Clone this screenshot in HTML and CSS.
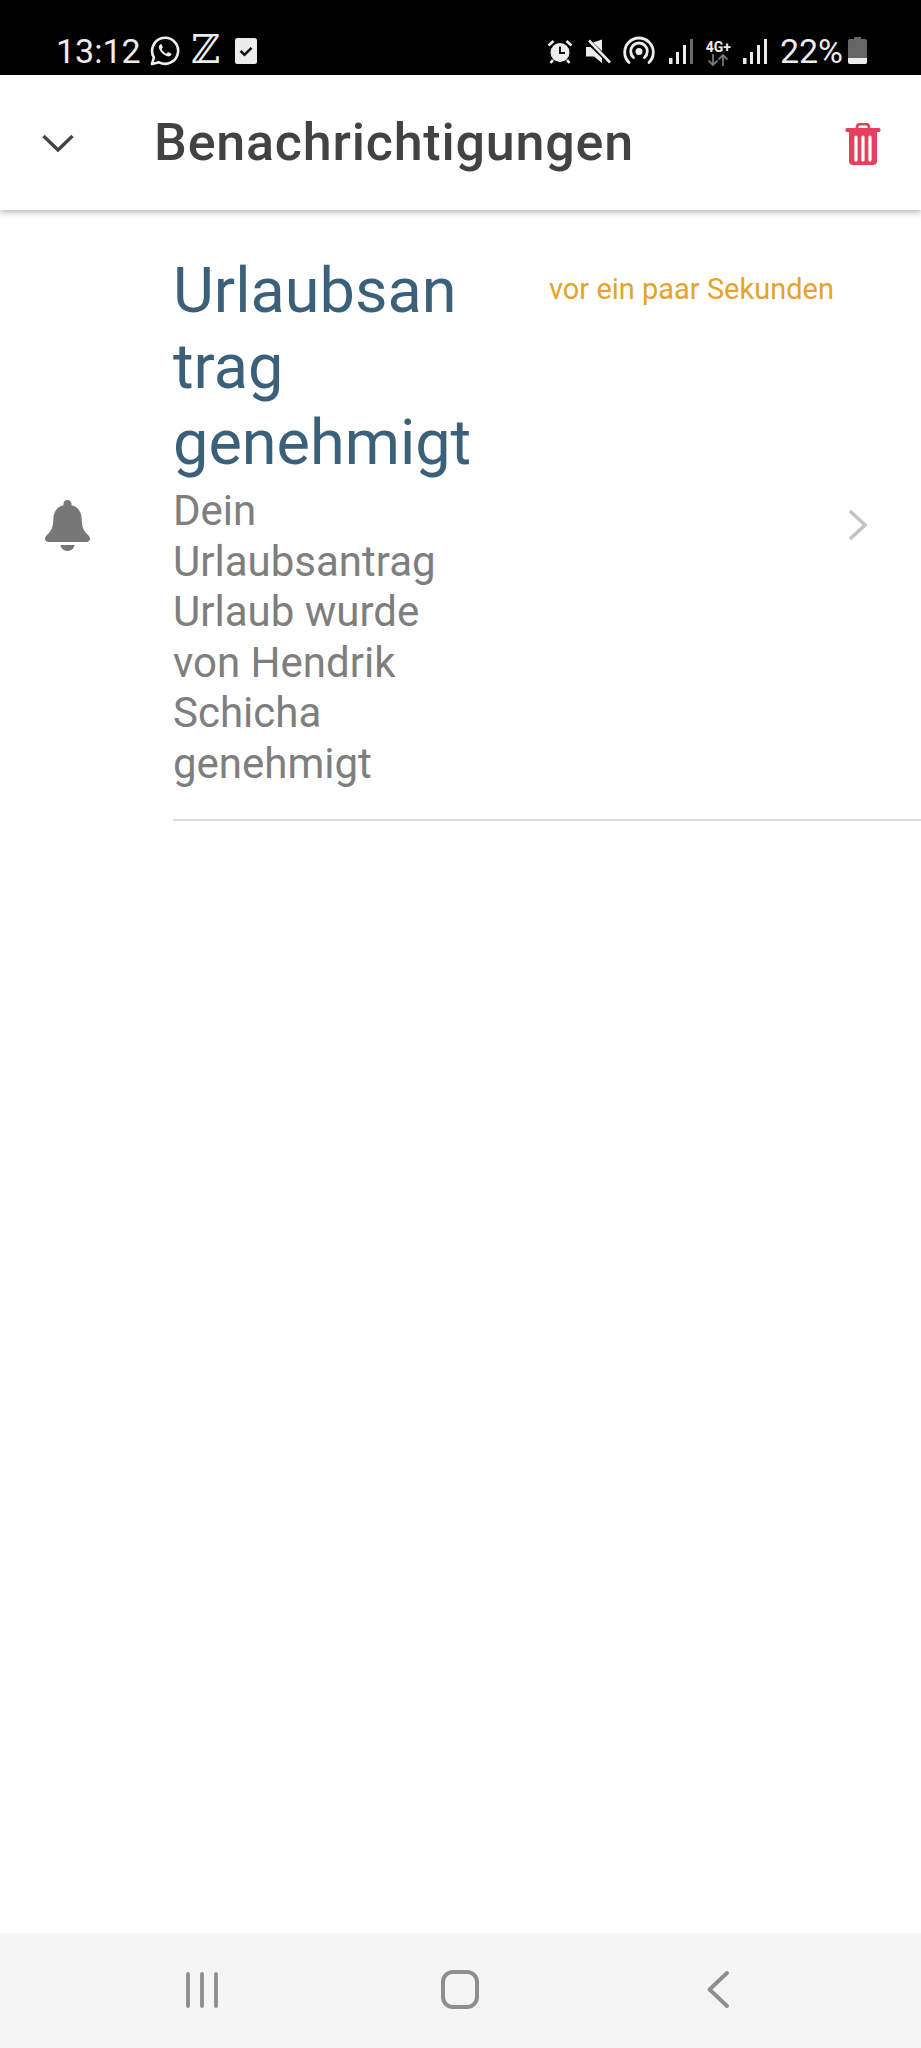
FILE: index.html
```html
<!DOCTYPE html>
<html>
	<head>
		<meta http-equiv="Content-Type" content="text/html; charset=UTF-8" />
		<meta name="viewport" content="initial-scale=1.0">
		<title>Benachrichtigungen</title>
		<link rel="stylesheet" href="styles.css">
	</head>
	<body>
		<div class="status-bar">
			<div class="status-group">
				<span class="status-time">13:12</span>
				<svg class="st-whatsapp" width="30" height="30" viewBox="0 0 30 30" fill="none" stroke="#f0f0f0" stroke-width="2.6">
					<path d="M2 28l1.900-6.600A13 13 0 1 1 9 26.300z" stroke-linejoin="round"/>
					<path d="M10.500 8.200c-1.600 1-2 2.800-1.200 4.900 1.300 3.200 4 5.800 7.300 7 2 .7 3.800.2 4.800-1.400.3-.5.2-.9-.3-1.200l-2.500-1.200c-.5-.2-.8-.1-1.100.3l-.9 1.100c-2.300-.9-4-2.500-5-4.700l.9-1c.3-.3.4-.7.2-1.100l-1.100-2.400c-.2-.5-.6-.7-1.100-.3z" fill="#f0f0f0" stroke="none"/>
				</svg>
				<span class="status-z">ℤ</span>
				<svg class="st-check" width="22" height="26" viewBox="0 0 22 26">
					<rect width="22" height="26" rx="2.500" fill="#ececec"/>
					<path d="M5.500 13l4 3.800 7-7" fill="none" stroke="#111" stroke-width="2.600"/>
				</svg>
			</div>
			<div class="status-group">
				<svg class="st-alarm" width="26" height="25" viewBox="0 0 26 25">
					<circle cx="13" cy="13.500" r="9.500" fill="#ececec"/>
					<path d="M13 7.500v6.500h5" fill="none" stroke="#111" stroke-width="2"/>
					<path d="M1.500 6.500l5-4.500M24.500 6.500l-5-4.500M6 21l-2.500 3M20 21l2.500 3" stroke="#ececec" stroke-width="2.600"/>
				</svg>
				<svg class="st-mute" width="26" height="25" viewBox="0 0 26 25">
					<path d="M17 0.500v11.500l-9-8.500zM1 8h4.500l11.500 11v5l-8-6.500h-8z" fill="#ececec"/>
					<path d="M4 1.500l21 22" stroke="#ececec" stroke-width="2.600"/>
				</svg>
				<svg class="st-hotspot" width="32" height="28" viewBox="0 0 32 28" fill="none" stroke="#ececec" stroke-width="2.800" stroke-linecap="round">
					<path d="M6 26.500a14.300 14.300 0 1 1 20 0"/>
					<path d="M10.500 21.500a8.300 8.300 0 1 1 11 0"/>
					<circle cx="16" cy="15.500" r="3.500" fill="#ececec" stroke="none"/>
				</svg>
				<svg class="st-signal" width="24" height="25" viewBox="0 0 24 25" fill="#ececec">
					<rect x="0" y="19" width="3.500" height="6"/>
					<rect x="7" y="13" width="3" height="12"/>
					<rect x="14" y="6" width="3" height="19"/>
					<rect x="21" y="0" width="3" height="25" fill="#6b6b6b"/>
				</svg>
				<div class="st-net">
					<span class="st-net-label">4G+</span>
					<svg width="22" height="12" viewBox="0 0 22 12" fill="none" stroke="#777" stroke-width="1.800">
						<path d="M6 0v11M1.500 6.500l4.500 4.500 4.500-4.500"/>
						<path d="M16 12v-11M11.500 5.500l4.500-4.500 4.500 4.500"/>
					</svg>
				</div>
				<svg class="st-signal st-signal-full" width="24" height="25" viewBox="0 0 24 25" fill="#ececec">
					<rect x="0" y="19" width="3.500" height="6"/>
					<rect x="7" y="13" width="3" height="12"/>
					<rect x="14" y="6" width="3" height="19"/>
					<rect x="21" y="0" width="3" height="25"/>
				</svg>
				<span class="status-batt">22%</span>
				<svg class="st-battery" width="19" height="27" viewBox="0 0 19 27">
					<path d="M6 0h7v2h4a2 2 0 0 1 2 2v21a2 2 0 0 1-2 2H2a2 2 0 0 1-2-2V4a2 2 0 0 1 2-2h4z" fill="#666"/>
					<path d="M0 21h19v4a2 2 0 0 1-2 2H2a2 2 0 0 1-2-2z" fill="#ececec"/>
				</svg>
			</div>
		</div>

		<div class="top-bar">
			<svg class="top-back" width="32" height="18" viewBox="0 0 32 18" fill="none" stroke="#444" stroke-width="3.400">
				<path d="M1.500 2l14.500 14 14.500-14"/>
			</svg>
			<div class="top-title">Benachrichtigungen</div>
			<svg class="top-trash" width="36" height="42" viewBox="0 0 36 42">
				<path d="M12 6V4a3 3 0 0 1 3-3h6a3 3 0 0 1 3 3v2" fill="none" stroke="#e6405e" stroke-width="2.800"/>
				<rect x="0.500" y="5" width="35" height="4" rx="1.500" fill="#e6405e"/>
				<path d="M4 9h28v29a4 4 0 0 1-4 4H8a4 4 0 0 1-4-4z" fill="#e6405e"/>
				<path d="M11 14v23M18 14v23M25 14v23" stroke="#fff" stroke-width="3.200" stroke-linecap="round"/>
			</svg>
		</div>

		<div class="note-list">
			<div class="note-item">
				<div class="note-icon">
					<svg width="45" height="51" viewBox="0 0 45 51" fill="#777">
						<path d="M22.500 0c2.300 0 4 1.700 4 4v1.300c6.800 1.500 10.200 7.200 10.200 14 0 9.700 3.300 12.600 7 16.500.9 1 1.300 1.800 1.300 3 0 2-1.600 3.200-3.300 3.200H3.300C1.600 42 0 40.800 0 38.800c0-1.200.4-2 1.300-3 3.700-3.900 7-6.800 7-16.500 0-6.800 3.400-12.500 10.200-14V4c0-2.300 1.700-4 4-4z"/>
						<path d="M15.500 45h14a7 6 0 0 1-14 0z"/>
					</svg>
				</div>
				<div class="note-main">
					<div class="note-body">
						<div class="note-title">Urlaubsantrag genehmigt</div>
						<div class="note-text">Dein Urlaubsantrag Urlaub wurde von Hendrik Schicha genehmigt</div>
					</div>
					<div class="note-time">vor ein paar Sekunden</div>
					<svg class="note-arrow" width="20" height="32" viewBox="0 0 20 32" fill="none" stroke="#c4c4c4" stroke-width="3.600">
						<path d="M2 2l15 14-15 14"/>
					</svg>
				</div>
			</div>
		</div>

		<div class="nav-bar">
			<div class="nav-cell">
				<svg width="32" height="36" viewBox="0 0 32 36" stroke="#8e8e8e" stroke-width="3.800" stroke-linecap="round">
					<path d="M2 2v32M16 2v32M30 2v32"/>
				</svg>
			</div>
			<div class="nav-cell">
				<svg width="38" height="39" viewBox="0 0 38 39" fill="none" stroke="#8e8e8e" stroke-width="4">
					<rect x="2" y="2" width="34" height="35" rx="10"/>
				</svg>
			</div>
			<div class="nav-cell">
				<svg width="22" height="37" viewBox="0 0 22 37" fill="none" stroke="#8e8e8e" stroke-width="3.800" stroke-linecap="round" stroke-linejoin="round">
					<path d="M20 2L2.500 18.500 20 35"/>
				</svg>
			</div>
		</div>
	</body>
</html>
```

FILE: styles.css
```css
html, body { margin: 0; padding: 0; background-color: white; }
body {
	display: flex;
	flex-direction: column;
	height: 2048px;
	overflow: hidden;
	font-family: Roboto, "Liberation Sans", sans-serif;
}

.status-bar {
	display: flex;
	justify-content: space-between;
	align-items: flex-end;
	height: 75px;
	box-sizing: border-box;
	padding: 0 54px 9px 56px;
	background-color: #000;
	color: #ececec;
}
.status-group { display: flex; align-items: flex-end; }
.status-time, .status-batt {
	font-size: 34px;
	line-height: 34px;
	font-weight: 400;
	margin-bottom: -2px;
}
.st-whatsapp { margin-left: 9px; }
.status-z {
	margin-left: 11px;
	width: 30px;
	font: 40px/34px "DejaVu Serif", serif;
	text-align: center;
}
.st-check { margin-left: 14px; margin-bottom: 2px; }
.st-alarm { margin-bottom: 2px; }
.st-mute { margin-left: 12px; margin-bottom: 2px; }
.st-hotspot { margin-left: 12px; margin-bottom: 2px; }
.st-signal { margin-left: 14px; margin-bottom: 2px; }
.st-net {
	display: flex;
	flex-direction: column;
	align-items: center;
	width: 29px;
	margin-left: 11px;
}
.st-net-label {
	font-size: 14px;
	line-height: 14px;
	font-weight: 700;
}
.st-signal-full { margin-left: 10px; }
.status-batt { margin-left: 13px; }
.st-battery { margin-left: 5px; margin-bottom: 2px; }

.top-bar {
	display: flex;
	align-items: center;
	height: 135px;
	box-sizing: border-box;
	padding: 0 40px 0 42px;
	position: relative;
	background-color: white;
	box-shadow: 0 2px 6px rgba(0, 0, 0, 0.3);
}
.top-back { flex: none; }
.top-title {
	flex: 1;
	margin-left: 80px;
	font-size: 52px;
	font-weight: 500;
	letter-spacing: 0.8px;
	color: #424242;
}
.top-trash { flex: none; margin-top: 2px; }

.note-list { flex: 1; }
.note-item { display: flex; align-items: center; }
.note-icon {
	flex: none;
	width: 173px;
	box-sizing: border-box;
	padding: 19px 0 0 45px;
	line-height: 0;
}
.note-main {
	flex: 1;
	display: flex;
	align-items: center;
	padding: 43px 53px 30px 0;
	border-bottom: 2px solid #dcdcdc;
}
.note-body { flex: none; width: 300px; }
.note-title {
	font-size: 63px;
	line-height: 76px;
	font-weight: 400;
	color: #3b6079;
	overflow-wrap: anywhere;
	margin-bottom: 5px;
}
.note-text {
	width: 270px;
	font-size: 42px;
	line-height: 50.5px;
	color: #7e7e7e;
}
.note-time {
	align-self: flex-start;
	margin: 20px 0 0 76px;
	font-size: 29px;
	line-height: 32px;
	white-space: nowrap;
	color: #e5a32a;
}
.note-arrow { margin: 7px 0 0 auto; }

.nav-bar {
	display: flex;
	justify-content: center;
	align-items: center;
	height: 115px;
	box-sizing: border-box;
	padding: 0 2px 2px 0;
	background-color: #f5f5f5;
}
.nav-cell {
	display: flex;
	justify-content: center;
	width: 258px;
	line-height: 0;
}
```
